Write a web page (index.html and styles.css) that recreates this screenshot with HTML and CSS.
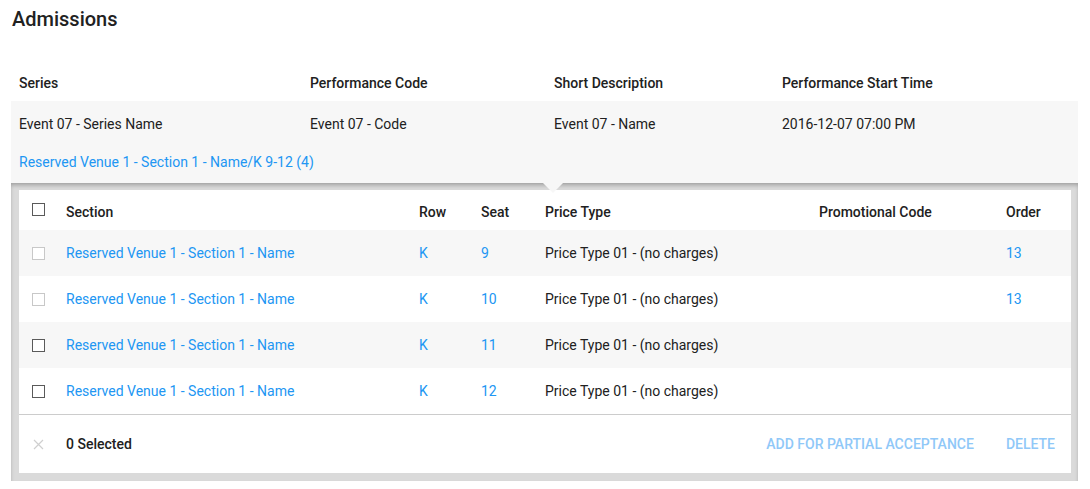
FILE: index.html
```html
<!DOCTYPE html>
<html>
<head>
<meta charset="utf-8">
<link rel="stylesheet" href="styles.css">
</head>
<body>
<div class="page">
  <h1 class="title">Admissions</h1>
  <div class="perf-grid perf-head">
    <div>Series</div>
    <div>Performance Code</div>
    <div>Short Description</div>
    <div>Performance Start Time</div>
  </div>
  <div class="summary">
    <div class="perf-grid perf-row">
      <div>Event 07 - Series Name</div>
      <div>Event 07 - Code</div>
      <div>Event 07 - Name</div>
      <div>2016-12-07 07:00 PM</div>
    </div>
    <a class="link summary-link">Reserved Venue 1 - Section 1 - Name/K 9-12 (4)</a>
  </div>
  <div class="panel">
    <span class="pointer"></span>
    <div class="card">
      <div class="seat-grid seat-head">
        <div class="cb-cell"><span class="cb cb-dark"></span></div>
        <div>Section</div>
        <div>Row</div>
        <div>Seat</div>
        <div>Price Type</div>
        <div>Promotional Code</div>
        <div>Order</div>
      </div>
      <div class="seat-grid seat-row alt">
        <div class="cb-cell"><span class="cb cb-light"></span></div>
        <div class="link">Reserved Venue 1 - Section 1 - Name</div>
        <div class="link">K</div>
        <div class="link">9</div>
        <div>Price Type 01 - (no charges)</div>
        <div></div>
        <div class="link">13</div>
      </div>
      <div class="seat-grid seat-row">
        <div class="cb-cell"><span class="cb cb-light"></span></div>
        <div class="link">Reserved Venue 1 - Section 1 - Name</div>
        <div class="link">K</div>
        <div class="link">10</div>
        <div>Price Type 01 - (no charges)</div>
        <div></div>
        <div class="link">13</div>
      </div>
      <div class="seat-grid seat-row alt">
        <div class="cb-cell"><span class="cb cb-dark"></span></div>
        <div class="link">Reserved Venue 1 - Section 1 - Name</div>
        <div class="link">K</div>
        <div class="link">11</div>
        <div>Price Type 01 - (no charges)</div>
        <div></div>
        <div></div>
      </div>
      <div class="seat-grid seat-row">
        <div class="cb-cell"><span class="cb cb-dark"></span></div>
        <div class="link">Reserved Venue 1 - Section 1 - Name</div>
        <div class="link">K</div>
        <div class="link">12</div>
        <div>Price Type 01 - (no charges)</div>
        <div></div>
        <div></div>
      </div>
      <div class="footer">
        <div class="cb-cell">
          <svg class="close" width="11" height="11" viewBox="0 0 11 11"><path d="M1 1L10 10M10 1L1 10" stroke="#cfcfcf" stroke-width="1.2" fill="none"/></svg>
        </div>
        <div class="selected">0 Selected</div>
        <div class="actions">
          <span class="btn">ADD FOR PARTIAL ACCEPTANCE</span>
          <span class="btn">DELETE</span>
        </div>
      </div>
    </div>
  </div>
</div>
</body>
</html>
```

FILE: styles.css
```css
* { box-sizing: border-box; }
html, body { margin: 0; padding: 0; background: #fff; }
body {
  font-family: Roboto, "Liberation Sans", Arial, sans-serif;
  font-size: 14px;
  color: #212121;
}
.page {
  width: 1067px;
  margin-left: 11px;
}
.title {
  margin: 0;
  padding: 7px 0 0 1px;
  height: 65px;
  font-size: 20px;
  font-weight: 500;
  line-height: 24px;
}
.perf-grid {
  display: grid;
  grid-template-columns: 291px 244px 228px 1fr;
  padding-left: 8px;
}
.perf-head {
  height: 36px;
  font-weight: 500;
  line-height: 36px;
}
.summary {
  background: #f7f7f7;
  height: 82px;
  padding-top: 13px;
}
.perf-row {
  line-height: 20px;
}
.summary-link {
  display: block;
  padding-left: 8px;
  margin-top: 18px;
  line-height: 20px;
}
.link { color: #2196f3; }
.panel {
  position: relative;
  background: #dadada;
  padding: 7px 7px 8px 8px;
  box-shadow: inset 0 3px 4px -1px rgba(0,0,0,0.28);
}
.pointer {
  position: absolute;
  top: 0;
  left: 532px;
  width: 0;
  height: 0;
  border-left: 10px solid transparent;
  border-right: 10px solid transparent;
  border-top: 10px solid #f7f7f7;
}
.card {
  background: #fff;
}
.seat-grid {
  display: grid;
  grid-template-columns: 47px 353px 62px 64px 274px 187px 65px;
  align-items: center;
}
.seat-head {
  height: 40px;
  padding-top: 4px;
  font-weight: 500;
}
.seat-row {
  height: 46px;
}
.seat-row.alt { background: #f7f7f7; }
.cb-cell {
  padding-left: 13px;
  display: flex;
  align-items: center;
}
.cb {
  display: block;
  width: 13px;
  height: 13px;
  border: 1px solid #555;
  background: #fff;
}
.seat-head .cb { margin-top: -6px; }
.cb-light { border-color: #c8c8c8; }
.cb-dark { border-color: #5a5a5a; }
.footer {
  display: flex;
  align-items: center;
  height: 59px;
  border-top: 1px solid #cccccc;
}
.footer .cb-cell { width: 47px; padding-left: 14px; }
.selected { font-weight: 500; }
.actions {
  margin-left: auto;
  display: flex;
  gap: 32px;
  padding-right: 16px;
}
.btn {
  color: #90c8f8;
  font-weight: 500;
  font-size: 14px;
}
```
